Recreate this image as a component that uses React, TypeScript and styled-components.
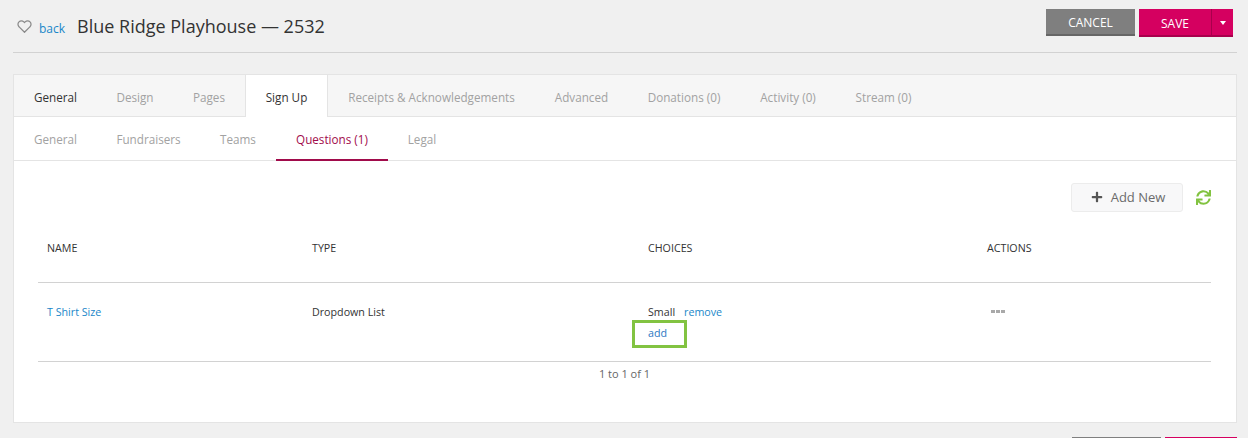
import React from "react";
import styled, { createGlobalStyle } from "styled-components";
import { FaPlus, FaSync } from "react-icons/fa";
import { FiHeart } from "react-icons/fi";

const GlobalStyle = createGlobalStyle`
  html, body {
    margin: 0;
    height: 438px;
    overflow: hidden;
    background: #f0f0f0;
    font-family: "Open Sans", "Liberation Sans", sans-serif;
    font-size: 11px;
    color: #333;
  }
  * { box-sizing: border-box; }
`;

const Page = styled.div`
  height: 438px;
  overflow: hidden;
  padding: 9px 11px 0 13px;
`;

const Header = styled.div`
  display: flex;
  align-items: flex-start;
  justify-content: space-between;
  height: 44px;
  border-bottom: 1px solid #d2d2d2;
`;

const TitleGroup = styled.div`
  display: flex;
  align-items: center;
  height: 34px;
  padding-left: 4px;
`;

const BackLink = styled.a`
  color: #1a87c9;
  font-size: 12px;
  margin: 4px 12px 0 7px;
`;

const Title = styled.h1`
  margin: 0;
  font-size: 18px;
  font-weight: 400;
  color: #333;
`;

const Buttons = styled.div`
  display: flex;
  gap: 4px;
  padding-right: 4px;
`;

const Action = styled.button<{ $bg: string; $edge: string; $w: number; $tall?: boolean; $split?: boolean }>`
  width: ${(p) => p.$w}px;
  height: ${(p) => (p.$tall ? 28 : 27)}px;
  margin: 0;
  padding: 2px 0 0;
  border: 0;
  border-bottom: 2px solid ${(p) => p.$edge};
  border-left: ${(p) => (p.$split ? `1px solid ${p.$edge}` : "0")};
  background: ${(p) => p.$bg};
  color: #fff;
  font-family: inherit;
  font-size: 12px;
`;

const SaveGroup = styled.div`
  display: flex;
  height: 28px;
`;

const Caret = styled.span`
  display: block;
  margin: 0 auto;
  width: 0;
  height: 0;
  border-left: 3.5px solid transparent;
  border-right: 3.5px solid transparent;
  border-top: 4px solid #fff;
`;

const Panel = styled.section`
  margin-top: 21px;
  height: 349px;
  background: #fff;
  border: 1px solid #e4e4e4;
`;

const MainTabs = styled.nav`
  display: flex;
  height: 42px;
  background: #f6f6f6;
  border-bottom: 1px solid #e4e4e4;
`;

const MainTab = styled.a<{ $active?: boolean; $dark?: boolean; $w: number }>`
  display: flex;
  align-items: center;
  justify-content: center;
  width: ${(p) => p.$w}px;
  height: ${(p) => (p.$active ? "42px" : "41px")};
  padding-top: 2px;
  font-size: 11.7px;
  color: ${(p) => (p.$active || p.$dark ? "#333" : "#a2a2a2")};
  background: ${(p) => (p.$active ? "#fff" : "transparent")};
  border-right: ${(p) => (p.$active ? "1px solid #e4e4e4" : "0")};
  border-left: ${(p) => (p.$active ? "1px solid #e4e4e4" : "0")};
`;

const SubTabs = styled.nav`
  display: flex;
  height: 44px;
  border-bottom: 1px solid #e4e4e4;
`;

const SubTab = styled.a<{ $active?: boolean; $w: number }>`
  display: flex;
  align-items: center;
  justify-content: center;
  width: ${(p) => p.$w}px;
  height: 44px;
  padding-top: ${(p) => (p.$active ? "2px" : "0")};
  font-size: 11.7px;
  color: ${(p) => (p.$active ? "#a10b4b" : "#a2a2a2")};
  border-bottom: ${(p) => (p.$active ? "2px solid #a10b4b" : "0")};
`;

const Content = styled.div`
  padding: 21px 25px 0 24px;
`;

const Toolbar = styled.div`
  display: flex;
  justify-content: flex-end;
  align-items: center;
  gap: 13px;
  height: 30px;
`;

const AddButton = styled.button`
  display: flex;
  align-items: center;
  justify-content: center;
  gap: 8px;
  width: 112px;
  height: 29px;
  padding: 0 0 0 2px;
  background: #f8f8f9;
  border: 1px solid #ececec;
  border-radius: 3px;
  color: #6b6b6b;
  font-family: inherit;
  font-size: 13px;
`;

const Row = styled.div<{ $h: number; $pt: number }>`
  display: grid;
  grid-template-columns: 265px 336px 339px 1fr;
  height: ${(p) => p.$h}px;
  padding: ${(p) => p.$pt}px 0 0 9px;
  border-bottom: 1px solid #d2d2d2;
  font-size: 10.7px;
  line-height: 15px;
`;

const Cell = styled.div`
  color: #333;
`;

const Link = styled.a`
  color: #1a87c9;
`;

const ChoiceLine = styled.div`
  display: flex;
  gap: 9px;
`;

const AddChoice = styled.div`
  margin-top: 6px;
  position: relative;
  color: #2a78c2;
  &::after {
    content: "";
    box-sizing: border-box;
    position: absolute;
    left: -16px;
    top: -6px;
    width: 55px;
    height: 28px;
    border: 3px solid #82c341;
  }
`;

const Dots = styled.span`
  display: block;
  margin: 5px 0 0 4px;
  width: 14px;
  height: 3px;
  background: repeating-linear-gradient(90deg, #a9a9a9 0 4px, #fff 4px 5px);
`;

const Pager = styled.div`
  text-align: center;
  font-size: 11px;
  color: #666;
  margin-top: 4px;
  line-height: 15px;
`;

const Footer = styled.div`
  display: flex;
  justify-content: flex-end;
  gap: 4px;
  margin-top: 14px;
`;

const FootButton = styled.div<{ $bg: string; $w: number }>`
  width: ${(p) => p.$w}px;
  height: 27px;
  background: ${(p) => p.$bg};
`;

const mainTabs: { label: string; w: number; active?: boolean; dark?: boolean }[] = [
  { label: "General", w: 83, dark: true },
  { label: "Design", w: 76 },
  { label: "Pages", w: 72 },
  { label: "Sign Up", w: 83, active: true },
  { label: "Receipts & Acknowledgements", w: 207 },
  { label: "Advanced", w: 93 },
  { label: "Donations (0)", w: 112 },
  { label: "Activity (0)", w: 96 },
  { label: "Stream (0)", w: 95 },
];

const subTabs: { label: string; w: number; active?: boolean }[] = [
  { label: "General", w: 83 },
  { label: "Fundraisers", w: 103 },
  { label: "Teams", w: 76 },
  { label: "Questions (1)", w: 112, active: true },
  { label: "Legal", w: 68 },
];

export default function App() {
  return (
    <Page>
      <GlobalStyle />
      <Header>
        <TitleGroup>
          <FiHeart size={15} color="#8a8a8a" />
          <BackLink>back</BackLink>
          <Title>Blue Ridge Playhouse — 2532</Title>
        </TitleGroup>
        <Buttons>
          <Action $bg="#7f7f7f" $edge="#666" $w={89}>CANCEL</Action>
          <SaveGroup>
            <Action $bg="#d50060" $edge="#a8004c" $w={72} $tall>SAVE</Action>
            <Action $bg="#d50060" $edge="#a8004c" $w={22} $tall $split>
              <Caret />
            </Action>
          </SaveGroup>
        </Buttons>
      </Header>

      <Panel>
        <MainTabs>
          {mainTabs.map((t) => (
            <MainTab key={t.label} $w={t.w} $active={t.active} $dark={t.dark}>{t.label}</MainTab>
          ))}
        </MainTabs>
        <SubTabs>
          {subTabs.map((t) => (
            <SubTab key={t.label} $w={t.w} $active={t.active}>{t.label}</SubTab>
          ))}
        </SubTabs>
        <Content>
          <Toolbar>
            <AddButton>
              <FaPlus size={12} color="#555" />
              Add New
            </AddButton>
            <FaSync size={15} color="#82c341" />
          </Toolbar>
          <Row $h={71} $pt={29}>
            <Cell>NAME</Cell>
            <Cell>TYPE</Cell>
            <Cell>CHOICES</Cell>
            <Cell>ACTIONS</Cell>
          </Row>
          <Row $h={79} $pt={22}>
            <Cell><Link>T Shirt Size</Link></Cell>
            <Cell>Dropdown List</Cell>
            <Cell>
              <ChoiceLine>
                Small
                <Link>remove</Link>
              </ChoiceLine>
              <AddChoice>add</AddChoice>
            </Cell>
            <Cell><Dots /></Cell>
          </Row>
          <Pager>1 to 1 of 1</Pager>
        </Content>
      </Panel>
      <Footer>
        <FootButton $bg="#7f7f7f" $w={89} />
        <FootButton $bg="#d50060" $w={72} />
      </Footer>
    </Page>
  );
}
